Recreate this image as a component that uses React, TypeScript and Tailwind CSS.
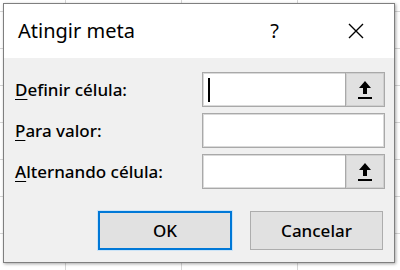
function UploadIcon() {
  return (
    <svg width="16" height="20" viewBox="0 0 16 20">
      <path d="M8 1 L14 8 L10 8 L10 14 L6 14 L6 8 L2 8 Z" fill="#000" />
      <rect x="1" y="17" width="14" height="2" fill="#000" />
    </svg>
  )
}

function Field({ picker, caret }: { picker?: boolean; caret?: boolean }) {
  return (
    <div className="flex h-[35px] w-[183px] border border-[#a9a9a9] bg-white shadow-[inset_0_0_0_1px_#dadada]">
      <div className="flex flex-1 items-center pl-[5px]">
        {caret && <div className="h-[24px] w-[2px] bg-black" />}
      </div>
      {picker && (
        <div className="flex w-[39px] items-center justify-center border-l border-[#a9a9a9] bg-[#e1e1e1] shadow-[inset_0_0_0_1px_#cfcfcf]">
          <UploadIcon />
        </div>
      )}
    </div>
  )
}

function Label({ k, rest }: { k: string; rest: string }) {
  return (
    <div className="flex h-[35px] items-center">
      <span>
        <span className="underline underline-offset-[3px]">{k}</span>
        {rest}
      </span>
    </div>
  )
}

export default function App() {
  return (
    <div className="h-[270px] w-[400px] overflow-hidden bg-white bg-[linear-gradient(to_right,#d6d6d6_1px,transparent_1px),linear-gradient(to_bottom,#d6d6d6_1px,transparent_1px)] bg-[size:116px_37px] bg-[position:65px_11px] pl-[3px] pt-[3px] font-['Noto_Sans',sans-serif] text-[17px] font-medium text-black">
      <div className="flex h-[260px] w-[392px] flex-col border border-[#7f7f7f] bg-[#f0f0f0] shadow-[1px_1px_3px_rgba(0,0,0,0.35)]">
        <div className="flex h-[54px] items-center bg-white pl-[14px] pr-[30px]">
          <div className="flex-1 text-[20px] font-normal">Atingir meta</div>
          <div className="mr-[69px] text-[20px] font-normal">?</div>
          <svg width="16" height="16" viewBox="0 0 16 16">
            <path d="M1 1 L15 15 M15 1 L1 15" stroke="#000" strokeWidth="1.4" />
          </svg>
        </div>
        <div className="flex flex-col pl-[11px] pr-[9px] pt-[14px]">
          <div className="flex justify-between">
            <div className="flex flex-col gap-[6px]">
              <Label k="D" rest="efinir célula:" />
              <Label k="P" rest="ara valor:" />
              <Label k="A" rest="lternando célula:" />
            </div>
            <div className="flex flex-col gap-[6px]">
              <Field picker caret />
              <Field />
              <Field picker />
            </div>
          </div>
          <div className="mt-[22px] flex justify-end gap-[18px] pr-[2px]">
            <button className="h-[39px] w-[134px] border-2 border-[#0078d7] bg-[#e1e1e1] shadow-[0_0_0_1px_#cce4f7]">
              OK
            </button>
            <button className="h-[39px] w-[133px] border border-[#adadad] bg-[#e1e1e1]">
              Cancelar
            </button>
          </div>
        </div>
      </div>
    </div>
  )
}
